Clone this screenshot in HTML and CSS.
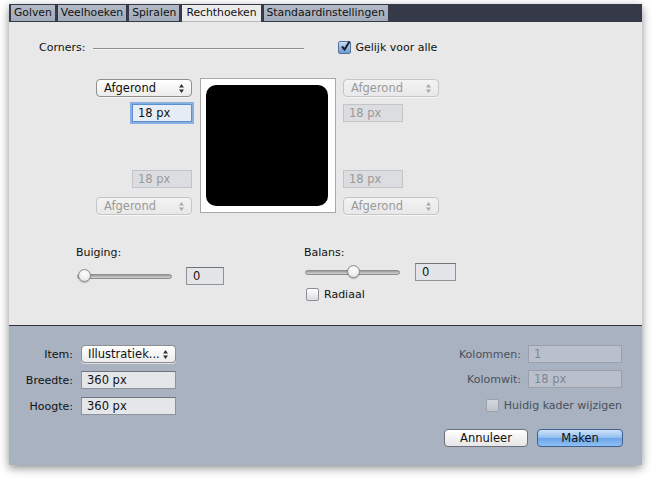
FILE: index.html
```html
<!DOCTYPE html>
<html>
<head>
<meta charset="utf-8">
<link rel="stylesheet" href="styles.css">
</head>
<body>
<div class="dialog">
  <div class="tabbar">
    <div class="tab">Golven</div>
    <div class="tab">Veelhoeken</div>
    <div class="tab">Spiralen</div>
    <div class="tab active">Rechthoeken</div>
    <div class="tab">Standaardinstellingen</div>
  </div>
  <div class="main">
    <div class="corners-row">
      <span class="label">Corners:</span>
      <span class="groove"></span>
      <span class="check checked">
        <svg viewBox="0 0 13 13" width="13" height="13"><path d="M3 6.5 L5.6 9.5 L10.5 1.5" fill="none" stroke="#1a1f2e" stroke-width="2"/></svg>
      </span>
      <span class="label">Gelijk voor alle</span>
    </div>
    <div class="corner-grid">
      <div class="corner-col">
        <div class="select sel-top">Afgerond<svg class="arr" viewBox="0 0 5 9" width="5" height="9"><path d="M2.5 0 L5 3.5 L0 3.5Z M2.5 9 L5 5.5 L0 5.5Z" fill="#333"/></svg></div>
        <div class="field focus w60 in-top">18 px</div>
        <div class="field disabled w60 in-bot">18 px</div>
        <div class="select disabled sel-bot">Afgerond<svg class="arr" viewBox="0 0 5 9" width="5" height="9"><path d="M2.5 0 L5 3.5 L0 3.5Z M2.5 9 L5 5.5 L0 5.5Z" fill="#aaa"/></svg></div>
      </div>
      <div class="preview"><div class="shape"></div></div>
      <div class="corner-col right">
        <div class="select disabled sel-top">Afgerond<svg class="arr" viewBox="0 0 5 9" width="5" height="9"><path d="M2.5 0 L5 3.5 L0 3.5Z M2.5 9 L5 5.5 L0 5.5Z" fill="#aaa"/></svg></div>
        <div class="field disabled w60 in-top">18 px</div>
        <div class="field disabled w60 in-bot">18 px</div>
        <div class="select disabled sel-bot">Afgerond<svg class="arr" viewBox="0 0 5 9" width="5" height="9"><path d="M2.5 0 L5 3.5 L0 3.5Z M2.5 9 L5 5.5 L0 5.5Z" fill="#aaa"/></svg></div>
      </div>
    </div>
    <div class="sliders">
      <div class="sl-block left">
        <div class="label">Buiging:</div>
        <div class="sl-row r1">
          <div class="track"><div class="knob" style="left:0px"></div></div>
          <div class="field num w38">0</div>
        </div>
      </div>
      <div class="sl-block rightb">
        <div class="label">Balans:</div>
        <div class="sl-row r2">
          <div class="track"><div class="knob" style="left:41px"></div></div>
          <div class="field num w41">0</div>
        </div>
        <div class="radio-row">
          <span class="check"></span>
          <span class="label">Radiaal</span>
        </div>
      </div>
    </div>
  </div>
  <div class="bottom">
    <div class="form-left">
      <span class="blabel">Item:</span>
      <div class="select bsel">Illustratiek...<svg class="arr" viewBox="0 0 5 9" width="5" height="9"><path d="M2.5 0 L5 3.5 L0 3.5Z M2.5 9 L5 5.5 L0 5.5Z" fill="#333"/></svg></div>
      <span class="blabel">Breedte:</span>
      <div class="field bfield">360 px</div>
      <span class="blabel">Hoogte:</span>
      <div class="field bfield">360 px</div>
    </div>
    <div class="form-right">
      <div class="kgrid">
        <span class="blabel dim">Kolommen:</span>
        <div class="field bdis">1</div>
        <span class="blabel dim">Kolomwit:</span>
        <div class="field bdis">18 px</div>
      </div>
      <div class="kader-row">
        <span class="check dimcheck"></span>
        <span class="blabel dim">Huidig kader wijzigen</span>
      </div>
      <div class="buttons">
        <div class="btn">Annuleer</div>
        <div class="btn primary">Maken</div>
      </div>
    </div>
  </div>
</div>
</body>
</html>
```
FILE: styles.css
```css
html, body {
  margin: 0;
  padding: 0;
  background: #ffffff;
}
body {
  font-family: "DejaVu Sans", "Liberation Sans", sans-serif;
  font-size: 11px;
  color: #111;
  width: 652px;
  height: 478px;
  overflow: hidden;
}
.dialog {
  margin: 4px 0 0 9px;
  width: 633px;
  box-shadow: 0 3px 9px rgba(0,0,0,0.45);
}
.tabbar {
  height: 18px;
  background: #363a48;
  display: flex;
  gap: 3px;
  padding-left: 2px;
  box-sizing: border-box;
  padding-top: 1px;
}
.tab {
  height: 16px;
  line-height: 16px;
  padding: 0 3px;
  font-size: 10.8px;
  background: linear-gradient(#b2bac7, #a2abba);
  color: #111;
}
.tab.active {
  background: #ebebeb;
  height: 17px;
  padding: 0 4px;
  box-shadow: inset 0 -1px 0 #b8b8b8;
}
.main {
  background: #e8e8e8;
  height: 303px;
  overflow: hidden;
}
.label { white-space: nowrap; }
.corners-row {
  display: flex;
  align-items: center;
  height: 14px;
  margin-top: 18px;
  padding-left: 30px;
}
.groove {
  width: 211px;
  height: 1px;
  background: #8e8e8e;
  box-shadow: 0 1px 0 #f6f6f6;
  margin: 2px 34px 0 8px;
}
.check {
  width: 11px;
  height: 11px;
  border: 1px solid #8c8f96;
  border-radius: 2px;
  background: linear-gradient(#ffffff, #dcdcdc);
  margin-right: 4px;
  position: relative;
  flex: none;
}
.check.checked {
  background: linear-gradient(#c8dcf3, #6d9ad4);
  border-color: #56729c;
}
.check svg {
  position: absolute;
  left: 0;
  top: -2px;
}
.corner-grid {
  display: flex;
  margin-top: 24px;
  padding-left: 87px;
  height: 138px;
}
.corner-col {
  width: 96px;
  display: flex;
  flex-direction: column;
  align-items: flex-end;
}
.corner-col.right {
  margin-left: 7px;
  align-items: flex-start;
}
.select {
  position: relative;
  box-sizing: border-box;
  width: 96px;
  height: 18px;
  line-height: 16px;
  padding-left: 7px;
  border: 1px solid #8f8f8f;
  border-radius: 4px;
  background: linear-gradient(#ffffff, #ececec);
  color: #111;
  box-shadow: 0 1px 0 rgba(255,255,255,0.6);
  font-size: 11.5px;
}
.select .arr {
  position: absolute;
  right: 7px;
  top: 4px;
}
.select.disabled {
  color: #9a9a9a;
  border-color: #c6c6c6;
  background: linear-gradient(#f3f3f3, #e8e8e8);
}
.sel-top { margin-top: 1px; }
.in-top { margin-top: 7px; }
.in-bot { margin-top: 48px; }
.sel-bot { margin-top: 9px; }
.field {
  box-sizing: border-box;
  height: 18px;
  line-height: 16px;
  padding-left: 5px;
  border: 1px solid #8e9299;
  border-top-color: #6f737a;
  background: #e3e5e9;
  color: #111;
  font-size: 11.5px;
}
.field.disabled {
  border-color: #c3c4c7;
  background: #dcdde0;
  color: #999;
}
.field.focus {
  border-color: #5f8fcf;
  background: #e6edf6;
  box-shadow: 0 0 0 2px rgba(120,165,225,0.85);
}
.w60 { width: 60px; }
.w38 { width: 38px; }
.w41 { width: 41px; }
.preview {
  margin-left: 8px;
  width: 136px;
  height: 135px;
  box-sizing: border-box;
  border: 1px solid #a8a8a8;
  background: #ffffff;
  padding: 6px 7px 6px 5px;
}
.shape {
  width: 122px;
  height: 121px;
  background: #000;
  border-radius: 10px;
}
.sliders {
  display: flex;
  margin-top: 30px;
}
.sl-block.left {
  margin-left: 67px;
  width: 228px;
}
.sl-row {
  display: flex;
  align-items: center;
}
.sl-row.r1 { margin-top: 8px; }
.sl-row.r2 { margin-top: 4px; }
.track {
  position: relative;
  width: 95px;
  height: 5px;
  box-sizing: border-box;
  border: 1px solid #8d8d8d;
  border-radius: 3px;
  background: linear-gradient(#9a9a9a, #d4d4d4);
  margin: 0 14px 0 1px;
}
.sl-row.r2 .track { margin-right: 15px; }
.knob {
  position: absolute;
  top: -6px;
  width: 13px;
  height: 13px;
  box-sizing: border-box;
  border: 1px solid #8a8a8a;
  border-radius: 50%;
  background: radial-gradient(circle at 50% 35%, #ffffff, #dedede);
  box-shadow: 0 1px 1px rgba(0,0,0,0.25);
}
.field.num { padding-left: 6px; }
.radio-row {
  display: flex;
  align-items: center;
  margin-top: 6px;
  margin-left: 2px;
  height: 14px;
}
.radio-row .check { margin-right: 5px; }
.bottom {
  border-top: 1px solid #30343f;
  background: #a9b2c0;
  height: 140px;
  box-sizing: border-box;
  display: flex;
  justify-content: space-between;
  padding: 19px 20px 0 0;
}
.form-left {
  display: grid;
  grid-template-columns: 64px 95px;
  column-gap: 8px;
  row-gap: 8px;
  align-content: start;
  align-items: center;
}
.blabel {
  text-align: right;
  white-space: nowrap;
  color: #111;
}
.blabel.dim { color: #4a505b; }
.bsel { width: 95px; padding-left: 6px; }
.bfield { width: 95px; background: #e4e6ea; }
.bdis {
  width: 94px;
  background: #b9c0cb;
  border-color: #9aa1ac;
  color: #7f8690;
}
.form-right {
  display: flex;
  flex-direction: column;
  align-items: flex-end;
}
.kgrid {
  display: grid;
  grid-template-columns: auto 94px;
  column-gap: 7px;
  row-gap: 7px;
  align-items: center;
}
.kader-row {
  display: flex;
  align-items: center;
  margin-top: 11px;
  height: 13px;
}
.check.dimcheck {
  background: linear-gradient(#d4d8de, #bfc4cc);
  border-color: #9ca1aa;
  margin-right: 5px;
}
.buttons {
  display: flex;
  gap: 9px;
  margin-top: 17px;
  margin-right: -1px;
}
.btn {
  box-sizing: border-box;
  width: 84px;
  height: 18px;
  line-height: 16px;
  text-align: center;
  border: 1px solid #6c717a;
  border-radius: 4px;
  background: linear-gradient(#ffffff, #e6e6e6);
  font-size: 11.5px;
  color: #111;
}
.btn.primary {
  width: 86px;
  border-color: #3f5f8f;
  background: linear-gradient(#cfe3fb, #8fbcef 50%, #6aa4ea 51%, #8fc0f5);
}
```
